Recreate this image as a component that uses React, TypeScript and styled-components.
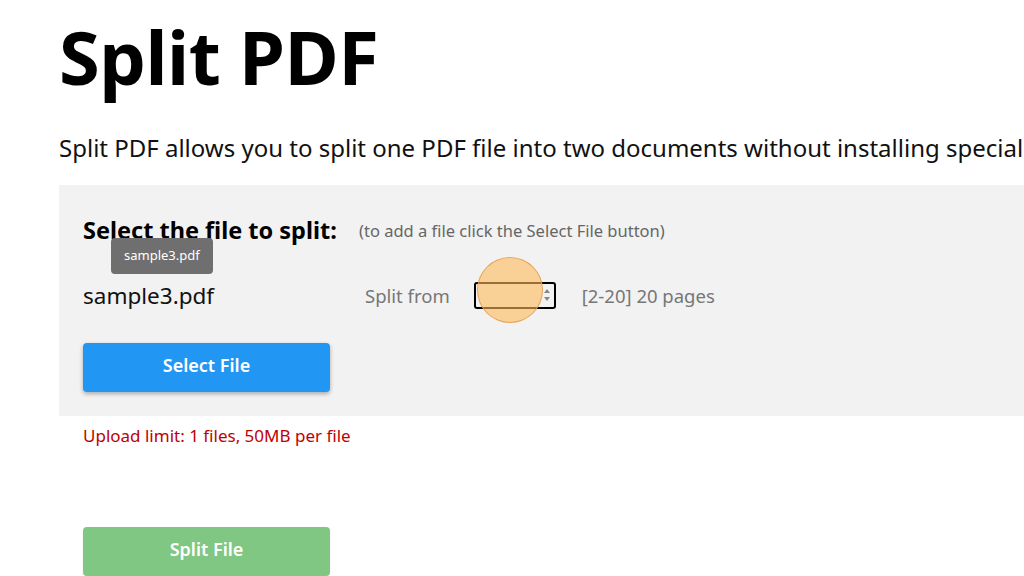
import styled, {createGlobalStyle} from "styled-components";

const GlobalStyle = createGlobalStyle`
    html, body {
        margin: 0;
        padding: 0;
        background: #ffffff;
        overflow: hidden;
    }
    body {
        font-family: "Noto Sans", "Open Sans", sans-serif;
        color: #111;
    }
`

const Page = styled.div`
    width: 1400px;
    padding-left: 59px;
    box-sizing: border-box;
`

const Title = styled.h1`
    margin: 0;
    padding-top: 11px;
    font-size: 74px;
    line-height: 92px;
    font-weight: 700;
    letter-spacing: -0.5px;
    color: #000;
`

const Intro = styled.p`
    margin: 30px 0 0;
    font-size: 24px;
    line-height: 30px;
    white-space: nowrap;
    color: #111;
`

const Panel = styled.section`
    margin-top: 22px;
    background: #f2f2f2;
    padding: 29px 24px 24px;
    height: 231px;
    box-sizing: border-box;
`

const Row = styled.div`
    display: flex;
    align-items: center;
`

const Heading = styled.h2`
    margin: 0;
    width: 276px;
    font-size: 23.5px;
    line-height: 32px;
    font-weight: 700;
    color: #000;
`

const Hint = styled.span`
    font-size: 16.5px;
    color: #666;
`

const FileRow = styled(Row)`
    margin-top: 34px;
    height: 30px;
`

const FileName = styled.div`
    position: relative;
    width: 282px;
    font-size: 22.5px;
    color: #111;
`

const Tooltip = styled.div`
    position: absolute;
    left: 28px;
    top: -42px;
    padding: 9px 13px 10px;
    line-height: 17px;
    background: #6f6f6f;
    color: #fff;
    font-size: 13px;
    border-radius: 4px;
    white-space: nowrap;
`

const Label = styled.span`
    font-size: 18.5px;
    color: #777;
`

const NumberBox = styled.div`
    position: relative;
    margin-left: 24px;
    width: 82px;
    height: 27px;
    box-sizing: border-box;
    border: 2.5px solid #000;
    border-radius: 3px;
    background: #f2f2f2;
    display: flex;
    justify-content: flex-end;
    align-items: center;
    padding-right: 3px;
`

const Spinner = styled.svg`
    width: 8px;
    height: 16px;
`

const Highlight = styled.div`
    position: absolute;
    left: 1px;
    top: -27px;
    width: 66px;
    height: 66px;
    border-radius: 50%;
    background: rgba(253, 186, 90, 0.6);
    border: 1.5px solid rgba(230, 150, 70, 0.8);
    box-sizing: border-box;
`

const Pages = styled(Label)`
    margin-left: 26px;
`

const Button = styled.button<{ $variant: "blue" | "green" }>`
    display: block;
    width: 247px;
    height: 49px;
    padding: 0 0 5px;
    border: none;
    border-radius: 4px;
    font-family: inherit;
    font-size: 18px;
    font-weight: 600;
    color: #fff;
    background: ${p => p.$variant === "blue" ? "#2196f3" : "#80c783"};
    box-shadow: ${p => p.$variant === "blue" ? "0 2px 4px rgba(0,0,0,0.3)" : "0 1px 3px rgba(0,0,0,0.08)"};
    cursor: pointer;
`

const SelectButton = styled(Button)`
    margin-top: 33px;
`

const Limit = styled.div`
    margin: 9px 0 0 24px;
    font-size: 17px;
    line-height: 22px;
    color: #c00000;
`

const SplitButton = styled(Button)`
    margin: 80px 0 0 24px;
`

export default function App() {
    return (
        <Page>
            <GlobalStyle/>
            <Title>Split PDF</Title>
            <Intro>Split PDF allows you to split one PDF file into two documents without installing special software</Intro>
            <Panel>
                <Row>
                    <Heading>Select the file to split:</Heading>
                    <Hint>(to add a file click the Select File button)</Hint>
                </Row>
                <FileRow>
                    <FileName>
                        sample3.pdf
                        <Tooltip>sample3.pdf</Tooltip>
                    </FileName>
                    <Label>Split from</Label>
                    <NumberBox>
                        <Spinner viewBox="0 0 8 16">
                            <path d="M4 2 L7 6 L1 6 Z" fill="#888"/>
                            <path d="M4 14 L7 10 L1 10 Z" fill="#888"/>
                        </Spinner>
                        <Highlight/>
                    </NumberBox>
                    <Pages>[2-20] 20 pages</Pages>
                </FileRow>
                <SelectButton $variant="blue">Select File</SelectButton>
            </Panel>
            <Limit>Upload limit: 1 files, 50MB per file</Limit>
            <SplitButton $variant="green">Split File</SplitButton>
        </Page>
    );
}
